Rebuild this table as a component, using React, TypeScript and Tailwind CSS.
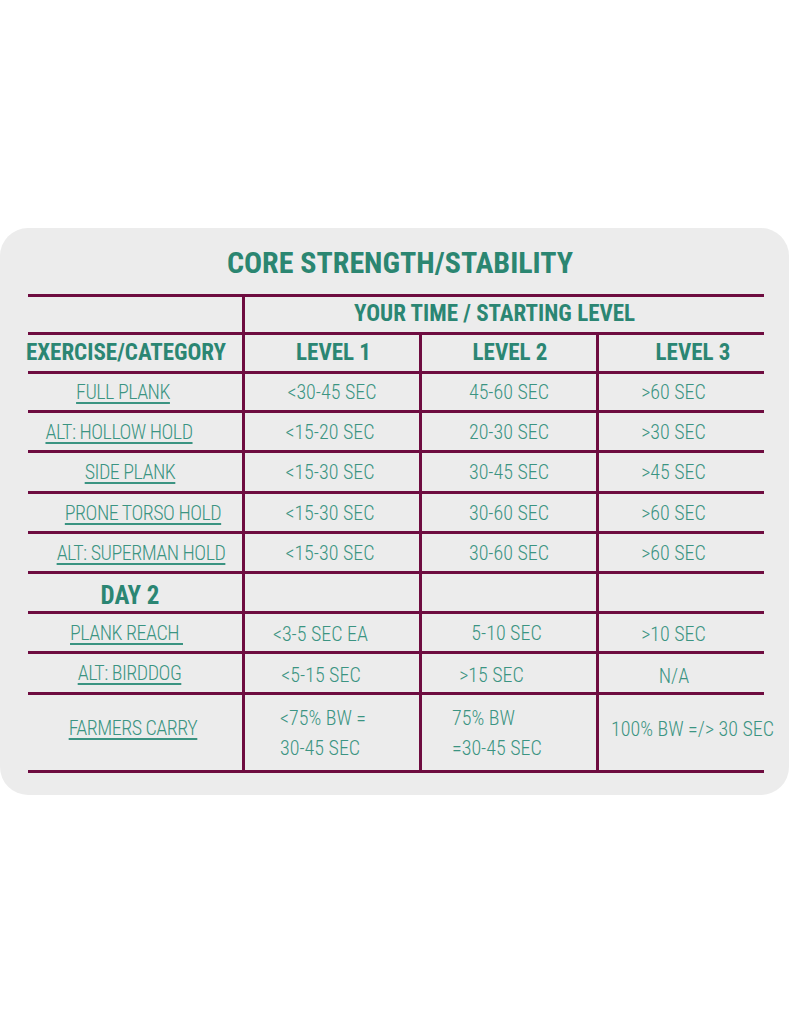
import React from 'react';

type Row = {
    h: string;
    cells: { text: React.ReactNode; cls?: string }[];
    underline?: boolean;
};

const line = 'border-[#6e0c40]';
const body = 'text-[20px] font-[350] text-[#3b9482]';
const head = 'text-[23px] font-bold text-[#2b8673]';
const label = 'underline decoration-2 underline-offset-[3px] tracking-[-0.5px]';

const rows: Row[] = [
    {
        h: 'h-[39px]',
        cells: [
            { text: 'FULL PLANK', cls: 'pr-[24px]' },
            { text: '<30-45 SEC' },
            { text: '45-60 SEC' },
            { text: '>60 SEC', cls: 'pr-[16px]' },
        ],
        underline: true,
    },
    {
        h: 'h-[40px]',
        cells: [
            { text: 'ALT: HOLLOW HOLD', cls: 'pr-[32px]' },
            { text: '<15-20 SEC', cls: 'pr-[4px]' },
            { text: '20-30 SEC' },
            { text: '>30 SEC', cls: 'pr-[16px]' },
        ],
        underline: true,
    },
    {
        h: 'h-[41px]',
        cells: [
            { text: 'SIDE PLANK', cls: 'pr-[10px]' },
            { text: '<15-30 SEC', cls: 'pr-[4px]' },
            { text: '30-45 SEC' },
            { text: '>45 SEC', cls: 'pr-[16px]' },
        ],
        underline: true,
    },
    {
        h: 'h-[40px]',
        cells: [
            { text: 'PRONE TORSO HOLD', cls: 'pl-[16px]' },
            { text: '<15-30 SEC', cls: 'pr-[4px]' },
            { text: '30-60 SEC' },
            { text: '>60 SEC', cls: 'pr-[16px]' },
        ],
        underline: true,
    },
    {
        h: 'h-[40px]',
        cells: [
            { text: 'ALT: SUPERMAN HOLD', cls: 'pl-[12px]' },
            { text: '<15-30 SEC', cls: 'pr-[4px]' },
            { text: '30-60 SEC' },
            { text: '>60 SEC', cls: 'pr-[16px]' },
        ],
        underline: true,
    },
];

const rows2: Row[] = [
    {
        h: 'h-[40px]',
        cells: [
            { text: 'PLANK REACH\u00a0', cls: 'pr-[17px]' },
            { text: '<3-5 SEC EA', cls: 'pr-[23px] pt-[3px]' },
            { text: '5-10 SEC', cls: 'pr-[5px]' },
            { text: '>10 SEC', cls: 'pr-[16px] pt-[2px]' },
        ],
        underline: true,
    },
    {
        h: 'h-[41px]',
        cells: [
            { text: 'ALT: BIRDDOG', cls: 'pr-[11px]' },
            { text: '<5-15 SEC', cls: 'pr-[22px] pt-[4px]' },
            { text: '>15 SEC', cls: 'pr-[35px] pt-[3px]' },
            { text: 'N/A', cls: 'pr-[15px] pt-[6px]' },
        ],
        underline: true,
    },
];

function Cell({
    children,
    first,
    cls = '',
}: {
    children?: React.ReactNode;
    first?: boolean;
    cls?: string;
}) {
    return (
        <div
            className={`flex items-center justify-center whitespace-nowrap ${
                first ? '' : `border-l-[3px] ${line}`
            } ${cls}`}
        >
            {children}
        </div>
    );
}

function BodyRow({ row }: { row: Row }) {
    return (
        <div
            className={`grid grid-cols-[214px_177px_177px_1fr] border-b-[3px] ${line} ${row.h}`}
        >
            {row.cells.map((c, i) => (
                <Cell key={i} first={i === 0} cls={`${body} ${c.cls ?? ''}`}>
                    {i === 0 && row.underline ? (
                        <span className={label}>{c.text}</span>
                    ) : (
                        c.text
                    )}
                </Cell>
            ))}
        </div>
    );
}

export default function App() {
    return (
        <div className="min-h-[1024px] bg-white pt-[228px] font-['Roboto',sans-serif] [font-stretch:75%]">
            <div className="w-[789px] h-[567px] rounded-[28px] bg-[#ececec]">
                <div className="h-[66px] flex items-center justify-center pl-[11px] pt-[4px]">
                    <h1 className="text-[30px] leading-none font-bold text-[#2b8671]">
                        CORE STRENGTH/STABILITY
                    </h1>
                </div>

                <div className={`ml-[28px] w-[736px] border-t-[3px] ${line}`}>
                    <div
                        className={`grid grid-cols-[214px_1fr] h-[38px] border-b-[3px] ${line}`}
                    >
                        <Cell first />
                        <Cell cls={`${head} pr-[20px]`}>
                            YOUR TIME / STARTING LEVEL
                        </Cell>
                    </div>

                    <div
                        className={`grid grid-cols-[214px_177px_177px_1fr] h-[39px] border-b-[3px] ${line}`}
                    >
                        <Cell first cls={`${head} pr-[18px]`}>
                            EXERCISE/CATEGORY
                        </Cell>
                        <Cell cls={`${head} pl-[3px]`}>LEVEL 1</Cell>
                        <Cell cls={`${head} pl-[2px]`}>LEVEL 2</Cell>
                        <Cell cls={`${head} pl-[23px]`}>LEVEL 3</Cell>
                    </div>

                    {rows.map((r, i) => (
                        <BodyRow key={i} row={r} />
                    ))}

                    <div
                        className={`grid grid-cols-[214px_177px_177px_1fr] h-[40px] border-b-[3px] ${line}`}
                    >
                        <Cell first cls="text-[25px] font-bold text-[#2b8673] pr-[10px] pt-[3px]">
                            DAY 2
                        </Cell>
                        <Cell />
                        <Cell />
                        <Cell />
                    </div>

                    {rows2.map((r, i) => (
                        <BodyRow key={i} row={r} />
                    ))}

                    <div
                        className={`grid grid-cols-[214px_177px_177px_1fr] h-[78px] border-b-[3px] ${line}`}
                    >
                        <Cell first cls={`${body} pr-[4px] pb-[10px]`}>
                            <span className={label}>FARMERS CARRY</span>
                        </Cell>
                        <div className={`flex flex-col justify-center pl-[35px] border-l-[3px] ${line} ${body} leading-[30px]`}>
                            <span>{'<75% BW ='}</span>
                            <span>30-45 SEC</span>
                        </div>
                        <div className={`flex flex-col justify-center pl-[30px] border-l-[3px] ${line} ${body} leading-[30px]`}>
                            <span>75% BW</span>
                            <span>=30-45 SEC</span>
                        </div>
                        <div className={`flex items-center pl-[12px] pb-[8px] whitespace-nowrap border-l-[3px] ${line} ${body}`}>
                            {'100% BW =/> 30 SEC'}
                        </div>
                    </div>
                </div>
            </div>
        </div>
    );
}
